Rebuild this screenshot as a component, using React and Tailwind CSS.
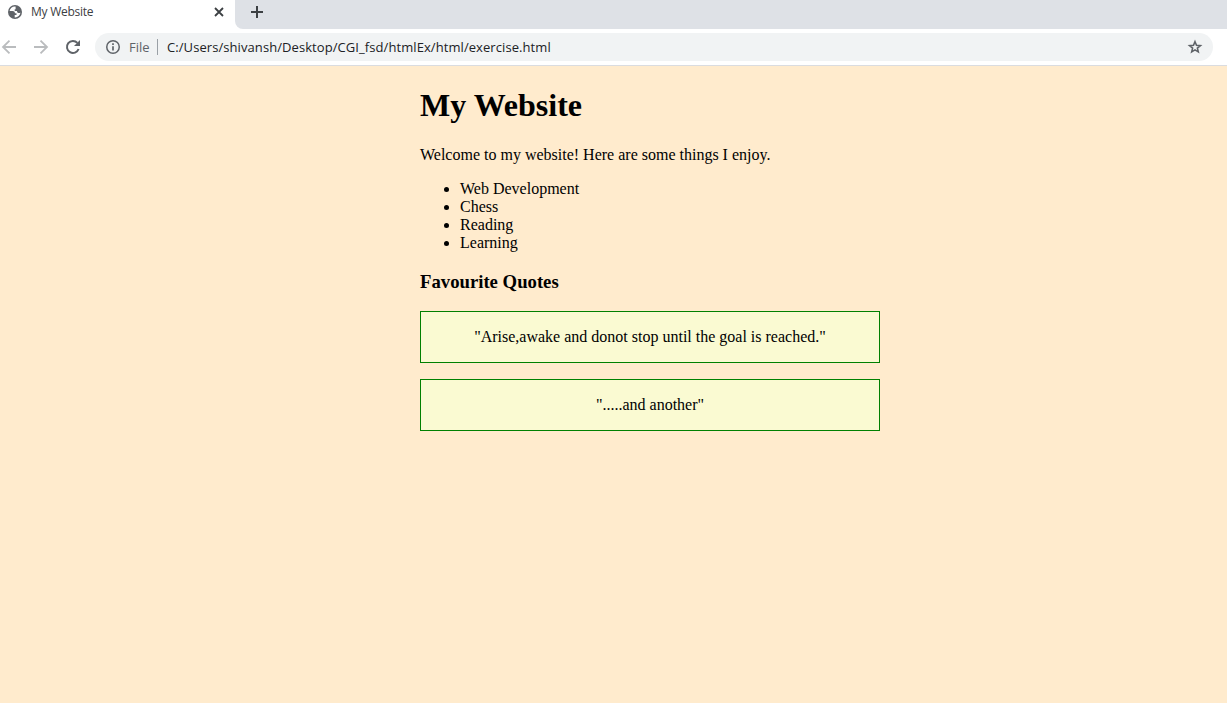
import React from "react";

const hobbies = ["Web Development", "Chess", "Reading", "Learning"];
const quotes = [
  '"Arise,awake and donot stop until the goal is reached."',
  '".....and another"',
];

function Globe() {
  return (
    <svg viewBox="0 0 16 16" className="size-4 shrink-0">
      <circle cx="8" cy="8" r="7" fill="#5f6368" />
      <path
        d="M8.6 2.6C5.6 2.2 3.1 4.2 2.6 7.1h2.9c1.6 0 2.4.8 2.4 2.1h1.6v1.7H7.7v2.5c3 .2 5.4-2 5.7-4.9-.6.5-1.3.6-2 .4-1-.2-1.400-.9-1.400-1.900H7.700V5.300h.9z"
        fill="#fff"
      />
    </svg>
  );
}

function LineIcon({ className, width = 1.8, children }) {
  return (
    <svg viewBox="0 0 20 20" fill="none" stroke="currentColor" strokeWidth={width} className={className}>
      {children}
    </svg>
  );
}

function TabStrip() {
  return (
    <div className="flex h-[29px] bg-white">
      <div className="flex h-6 w-[235px] shrink-0 items-center pl-[7px]">
        <Globe />
        <span className="ml-2 flex-1 text-[12px] tracking-[-0.25px] text-[#3c4043]">My Website</span>
        <LineIcon className="mr-[6px] size-5 text-[#3c4043]">
          <path d="M6 6l8 8M14 6l-8 8" />
        </LineIcon>
      </div>
      <div className="flex h-[29px] flex-1 rounded-bl-lg bg-[#dee1e6] pl-3 pt-[2px]">
        <LineIcon className="size-5 text-[#3c4043]" width={2}>
          <path d="M10 4v12M4 10h12" />
        </LineIcon>
      </div>
    </div>
  );
}

function Toolbar() {
  return (
    <div className="flex h-[37px] items-center border-b border-[#dadce0] bg-white pr-[14px]">
      <LineIcon className="-ml-px size-5 shrink-0 text-[#babcbe]">
        <path d="M17 10H4.500M10.500 3.600L4 10l6.500 6.400" />
      </LineIcon>
      <LineIcon className="ml-3 size-5 shrink-0 text-[#babcbe]">
        <path d="M3 10h12.500M9.500 3.600L16 10l-6.500 6.400" />
      </LineIcon>
      <LineIcon className="ml-3 size-5 shrink-0 text-[#5f6368]" width={2}>
        <path d="M15.600 12A6 6 0 1 1 14.400 5.900" />
        <path d="M17 3v6h-6z" fill="currentColor" stroke="none" />
      </LineIcon>
      <div className="ml-3 flex h-7 flex-1 items-center rounded-full bg-[#f1f3f4] px-2 text-[13px]">
        <LineIcon className="size-5 shrink-0 text-[#5f6368]" width={1.5}>
          <circle cx="10" cy="10" r="6.250" />
          <path d="M10 9.200v4.300M10 6.300v1.600" strokeWidth="1.700" />
        </LineIcon>
        <span className="ml-[6px] w-[23px] whitespace-nowrap pt-px text-[#5f6368]">File</span>
        <span className="ml-[5px] h-4 w-px bg-[#9aa0a6]" />
        <span className="ml-[9px] flex-1 whitespace-nowrap pt-px tracking-[0.075px] text-[#202124]">
          C:/Users/shivansh/Desktop/CGI_fsd/htmlEx/html/exercise.html
        </span>
        <LineIcon className="size-5 shrink-0 text-[#5f6368]" width={1.6}>
          <path d="M10 4.700l1.500 3.600 3.900.3-3 2.500.9 3.800-3.300-2-3.300 2 .9-3.800-3-2.500 3.900-.3z" />
        </LineIcon>
      </div>
    </div>
  );
}

export default function App() {
  return (
    <div className="flex h-[703px] w-[1227px] flex-col overflow-hidden bg-[#ffebcd]">
      <header className="font-['Open_Sans',sans-serif]">
        <TabStrip />
        <Toolbar />
      </header>
      <main className="ml-[420px] w-[460px] pt-[21px] font-['Liberation_Serif',serif] text-[16px] leading-[18px] text-black">
        <h1 className="text-[32px] font-bold leading-[37px]">My Website</h1>
        <p className="mt-[22px]">Welcome to my website! Here are some things I enjoy.</p>
        <ul className="mt-4 list-disc pl-10">
          {hobbies.map((h) => (
            <li key={h}>{h}</li>
          ))}
        </ul>
        <h3 className="mt-[19px] text-[18.72px] font-bold leading-[21px]">Favourite Quotes</h3>
        <div className="mt-[19px] flex flex-col gap-4">
          {quotes.map((q) => (
            <p key={q} className="border border-[#008000] bg-[#fafad2] py-4 text-center">
              {q}
            </p>
          ))}
        </div>
      </main>
    </div>
  );
}
